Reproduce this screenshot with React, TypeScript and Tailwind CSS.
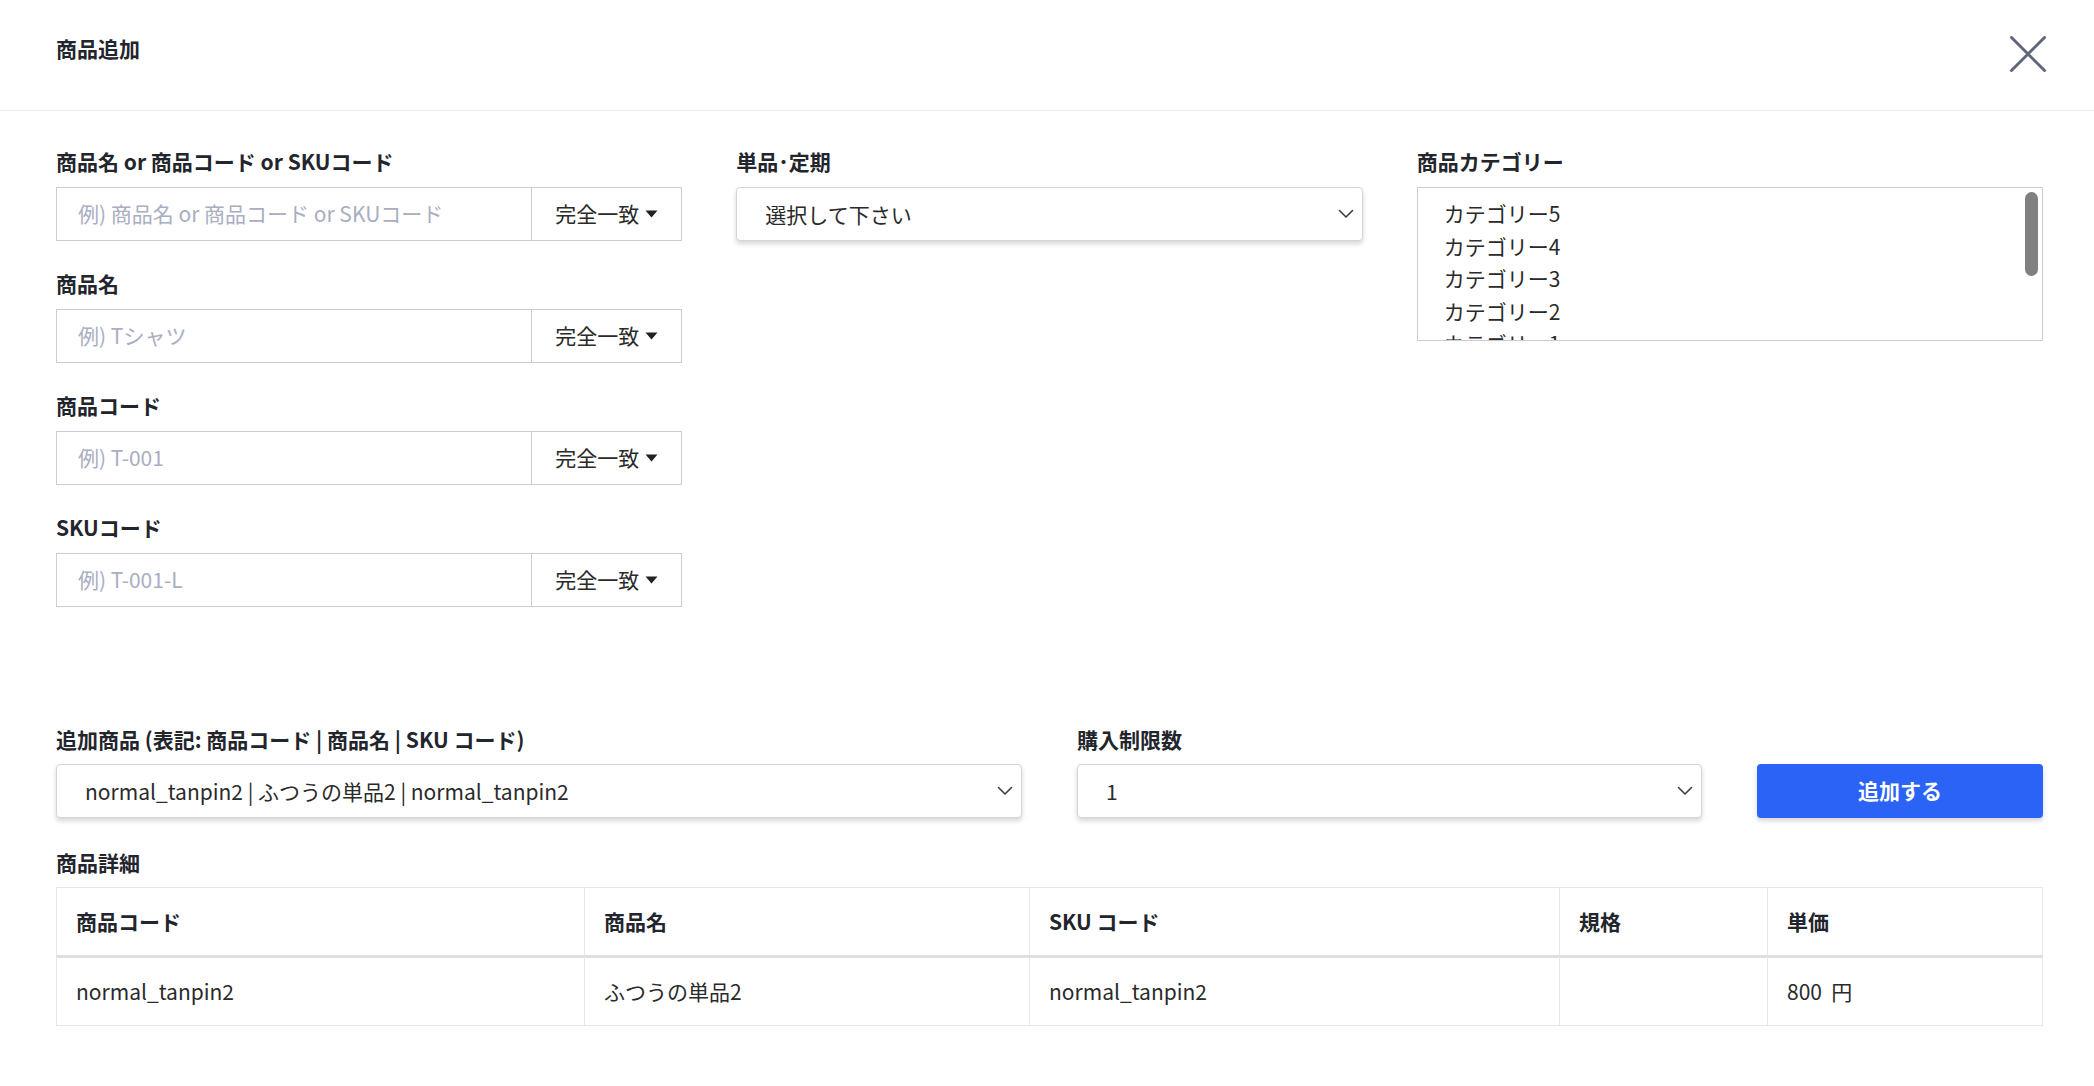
import React from "react";

const FONT = { fontFamily: '"Noto Sans CJK JP", "Noto Sans", sans-serif' };

function Chevron() {
  return (
    <svg width="16" height="10" viewBox="0 0 16 10" fill="none" className="shrink-0">
      <path d="M1.5 1.5 L8 8 L14.5 1.5" stroke="#3a3d48" strokeWidth="1.6" strokeLinecap="round" strokeLinejoin="round" />
    </svg>
  );
}

function Label({ children, className = "" }: { children: React.ReactNode; className?: string }) {
  return (
    <div className={"text-[21px] leading-[30px] font-bold text-[#23252d] " + className}>{children}</div>
  );
}

function SearchField({ label, placeholder }: { label: string; placeholder: string }) {
  return (
    <div>
      <Label className="mb-[11px]">{label}</Label>
      <div className="flex h-[54px] border border-[#c9ccda]">
        <input
          className="min-w-0 flex-1 px-[21px] text-[21px] text-[#333] placeholder:text-[#a9aec1] outline-none"
          placeholder={placeholder}
        />
        <button className="flex w-[150px] items-center justify-center gap-[6px] border-l border-[#c9ccda] text-[21px] text-[#2a2a2a]">
          完全一致
          <svg width="13" height="8" viewBox="0 0 13 8">
            <path d="M0.5 0.5 L12.5 0.5 L6.5 7.5 Z" fill="#222" />
          </svg>
        </button>
      </div>
    </div>
  );
}

function SelectBox({ value, className = "" }: { value: string; className?: string }) {
  return (
    <div
      className={
        "flex h-[54px] items-center justify-between rounded-[4px] border border-[#d3d4de] bg-white pl-[28px] pr-[8px] shadow-[0_3px_5px_rgba(0,0,0,0.16)] " +
        className
      }
    >
      <span className="pt-[2px] text-[21px] text-[#2a2a2a]">{value}</span>
      <Chevron />
    </div>
  );
}

export default function App() {
  const categories = ["カテゴリー5", "カテゴリー4", "カテゴリー3", "カテゴリー2", "カテゴリー1"];
  return (
    <div className="min-h-screen bg-white text-[#2a2a2a]" style={FONT}>
      <header className="flex h-[111px] items-start justify-between border-b border-[#ececef] pl-[56px] pr-[48px]">
        <h1 className="pt-[33px] text-[21px] leading-[30px] font-bold text-[#23252d]">商品追加</h1>
        <button className="mt-[36px]">
          <svg width="36" height="36" viewBox="0 0 36 36">
            <path d="M1.5 1.5 L34.5 34.5 M34.5 1.5 L1.5 34.5" stroke="#62667a" strokeWidth="3" strokeLinecap="round" />
          </svg>
        </button>
      </header>

      <main className="pl-[56px] pr-[51px] pt-[35px]">
        <div className="grid grid-cols-3 gap-x-[54px]">
          <div className="flex flex-col gap-[27px]">
            <SearchField label="商品名 or 商品コード or SKUコード" placeholder="例) 商品名 or 商品コード or SKUコード" />
            <SearchField label="商品名" placeholder="例) Tシャツ" />
            <SearchField label="商品コード" placeholder="例) T-001" />
            <SearchField label="SKUコード" placeholder="例) T-001-L" />
          </div>

          <div>
            <Label className="mb-[11px]">単品･定期</Label>
            <SelectBox value="選択して下さい" />
          </div>

          <div>
            <Label className="mb-[11px]">商品カテゴリー</Label>
            <div className="relative h-[154px] overflow-hidden border border-[#c9ccda] pl-[26px] pt-[9px]">
              {categories.map((c) => (
                <div key={c} className="text-[21px] leading-[32.5px] text-[#2a2a2a]">
                  {c}
                </div>
              ))}
              <div className="absolute right-[4px] top-[4px] h-[84px] w-[13px] rounded-full bg-[#808080]" />
            </div>
          </div>
        </div>

        <div className="mt-[117px] grid grid-cols-[966px_625px_1fr] gap-x-[55px]">
          <div>
            <Label className="mb-[10px]">追加商品 (表記: 商品コード | 商品名 | SKU コード)</Label>
            <SelectBox value="normal_tanpin2 | ふつうの単品2 | normal_tanpin2" />
          </div>
          <div>
            <Label className="mb-[10px]">購入制限数</Label>
            <SelectBox value="1" />
          </div>
          <div className="flex flex-col justify-end">
            <button className="h-[54px] rounded-[4px] bg-[#2a63f6] text-[21px] font-bold text-white shadow-[0_3px_5px_rgba(0,0,0,0.16)]">
              追加する
            </button>
          </div>
        </div>

        <Label className="mb-[10px] mt-[29px]">商品詳細</Label>
        <table className="w-full table-fixed border-collapse text-[21px]">
          <colgroup>
            <col className="w-[528px]" />
            <col className="w-[445px]" />
            <col className="w-[530px]" />
            <col className="w-[208px]" />
            <col />
          </colgroup>
          <thead>
            <tr className="h-[69px] border-b-[3px] border-[#dfe0e6]">
              {["商品コード", "商品名", "SKU コード", "規格", "単価"].map((h) => (
                <th
                  key={h}
                  className="border border-[#e6e7ec] border-b-[3px] border-b-[#dfe0e6] px-[19px] text-left font-bold text-[#23252d]"
                >
                  {h}
                </th>
              ))}
            </tr>
          </thead>
          <tbody>
            <tr className="h-[69px]">
              {["normal_tanpin2", "ふつうの単品2", "normal_tanpin2", "", "800\u00a0\u00a0円"].map((v, i) => (
                <td key={i} className="border border-[#e6e7ec] px-[19px] text-[#2a2a2a]">
                  {v}
                </td>
              ))}
            </tr>
          </tbody>
        </table>
      </main>
    </div>
  );
}
